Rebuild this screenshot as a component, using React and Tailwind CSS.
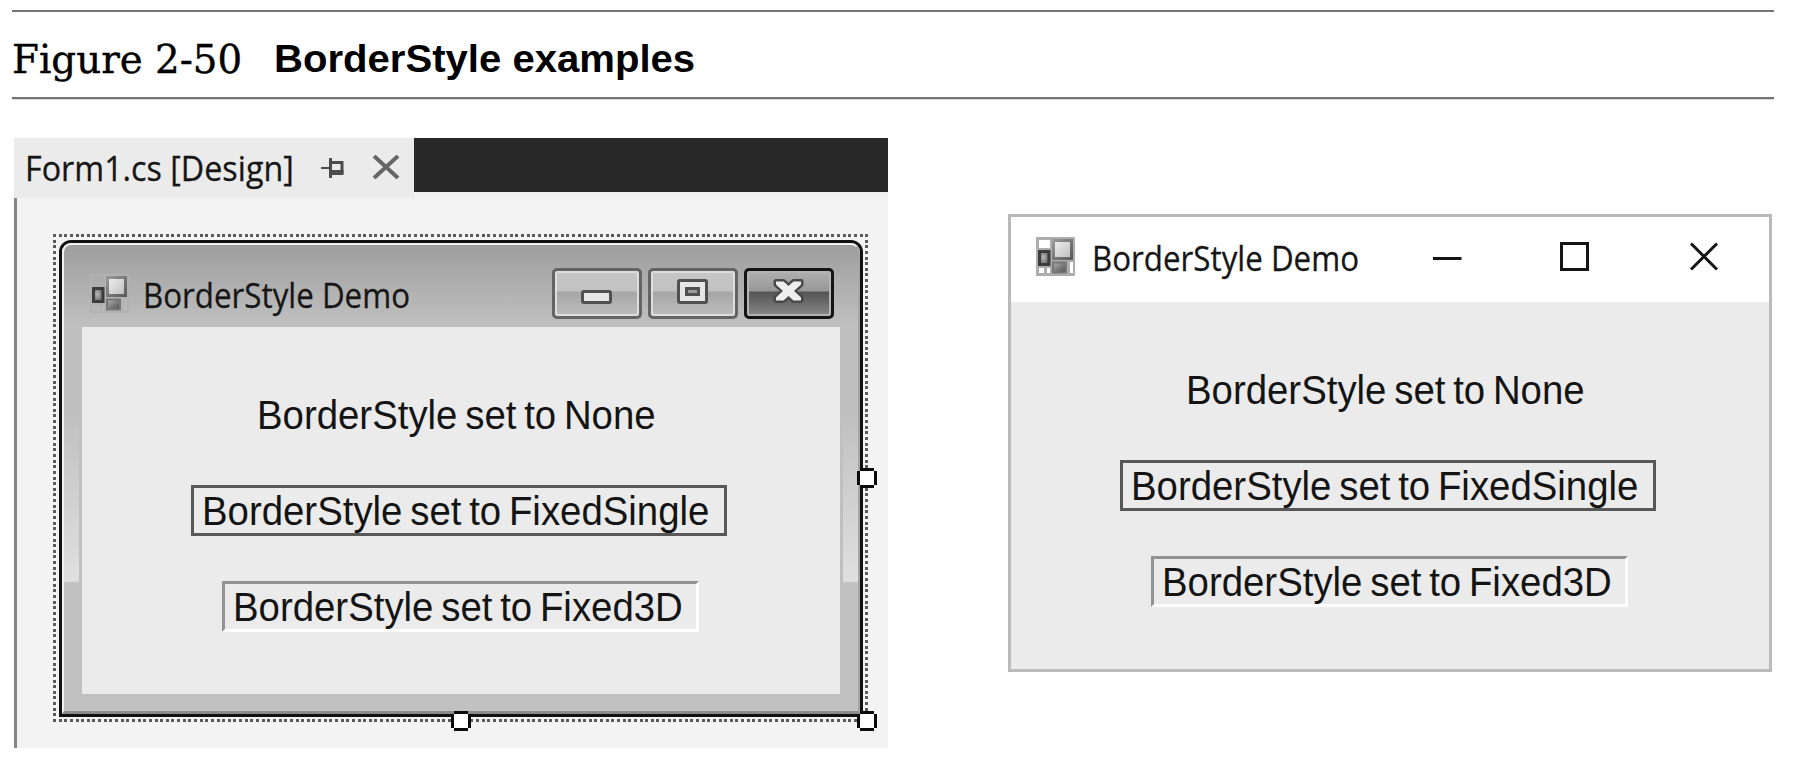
function FormIcon({ framed }) {
  const id = framed ? "framed" : "plain";
  return (
    <svg className="h-[39px] w-[39px] shrink-0" viewBox="0 0 39 39">
      <defs>
        <linearGradient id={id + "-light"} x1="0" y1="0" x2="1" y2="1">
          <stop offset="0" stopColor="#f0f0f0" />
          <stop offset="1" stopColor="#bdbdbd" />
        </linearGradient>
        <linearGradient id={id + "-edge"} x1="0" y1="0" x2="1" y2="1">
          <stop offset="0" stopColor="#979797" />
          <stop offset="1" stopColor="#5c5c5c" />
        </linearGradient>
        <radialGradient id={id + "-core"} cx="0.4" cy="0.45" r="0.7">
          <stop offset="0" stopColor="#b8b8b8" />
          <stop offset="1" stopColor="#5a5a5a" />
        </radialGradient>
        <linearGradient id={id + "-low"} x1="0" y1="0" x2="1" y2="1">
          <stop offset="0" stopColor="#b0b0b0" />
          <stop offset="1" stopColor="#4e4e4e" />
        </linearGradient>
      </defs>
      {framed ? (
        <>
          <rect width="39" height="39" fill="#adadad" />
          <rect x="3" y="3" width="11" height="8" fill="#fff" />
          <rect x="3" y="31" width="5" height="5" fill="#fff" />
          <rect x="11" y="31" width="3" height="5" fill="#fff" />
          <rect x="34" y="25" width="3" height="11" fill="#fff" />
        </>
      ) : (
        <>
          <rect x="1" y="1" width="37" height="37" fill="none" stroke="#b2b2b2" strokeWidth="2" />
          <path d="M15 2v35M2 13h13M2 30h13M11 30v7M33 24v13" stroke="#b2b2b2" strokeWidth="2" />
        </>
      )}
      <rect x="17.5" y="3.500" width="18" height="18" fill={`url(#${id}-light)`} stroke={`url(#${id}-edge)`} strokeWidth="3" />
      <rect x="3.500" y="14.500" width="9.500" height="13" fill={`url(#${id}-core)`} stroke="#3d3d3d" strokeWidth="3" />
      <rect x="17" y="25.500" width="13" height="10" fill={`url(#${id}-low)`} stroke="#777" strokeWidth="2" />
    </svg>
  );
}

function WindowTitle() {
  return (
    <span className="origin-left scale-x-[0.894] whitespace-nowrap font-['Open_Sans',sans-serif] text-[35px] leading-[48px] text-[#161616] [-webkit-text-stroke:0.3px_#161616]">
      BorderStyle Demo
    </span>
  );
}

function Label({ children }) {
  return (
    <span className="inline-block origin-left scale-x-[0.959] whitespace-nowrap text-[40px] leading-[45px] [word-spacing:-3px]">
      {children}
    </span>
  );
}

function FormBody() {
  return (
    <div className="flex h-[367px] flex-col items-start gap-[45px] bg-[#ebebeb] pt-[62px] font-['Liberation_Sans',sans-serif] text-[#141414]">
      <div className="ml-[175px] h-[51px] pt-[4px]">
        <Label>BorderStyle set to None</Label>
      </div>
      <div className="ml-[109px] h-[51px] w-[536px] border-[3px] border-[#585858] pt-px pl-[8px]">
        <Label>BorderStyle set to FixedSingle</Label>
      </div>
      <div className="ml-[140px] h-[51px] w-[477px] border-[3px] border-t-[#929292] border-r-white border-b-white border-l-[#929292] pt-px pl-[8px]">
        <Label>BorderStyle set to Fixed3D</Label>
      </div>
    </div>
  );
}

function CaptionButton({ dark, children }) {
  return (
    <div
      className={
        "flex h-[51px] w-[90px] justify-center rounded-[5px] border-[3px] pr-[2px] " +
        (dark
          ? "border-[#151515] bg-[linear-gradient(#b0b0b0_0,#989898_20px,#545454_21px,#888888_100%)] shadow-[inset_0_0_0_2px_#b4b4b4]"
          : "border-[#646464] bg-[linear-gradient(#c6c6c6_0,#c2c2c2_20px,#a6a6a6_21px,#bdbdbd_100%)] shadow-[inset_0_0_0_2px_#dedede]")
      }
    >
      {children}
    </div>
  );
}

function Handle({ place }) {
  return (
    <svg className={"absolute h-5 w-5 " + place} viewBox="0 0 20 20">
      <path d="M3 0h14v3h3v14h-3v3h-14v-3h-3v-14h3z" fill="#0a0a0a" />
      <rect x="3" y="3" width="14" height="14" fill="#fff" />
    </svg>
  );
}

function Selection() {
  return (
    <>
      <div className="absolute -top-[6px] -left-[6px] h-[3px] w-[815px] bg-[repeating-linear-gradient(90deg,#5a5a5a_0,#5a5a5a_3px,transparent_3px,transparent_5.640px)]" />
      <div className="absolute top-[479px] -left-[6px] h-[3px] w-[815px] bg-[repeating-linear-gradient(90deg,#5a5a5a_0,#5a5a5a_3px,transparent_3px,transparent_5.640px)]" />
      <div className="absolute -top-[6px] -left-[6px] h-[488px] w-[3px] bg-[repeating-linear-gradient(180deg,#5a5a5a_0,#5a5a5a_3px,transparent_3px,transparent_5.640px)]" />
      <div className="absolute -top-[6px] left-[806px] h-[488px] w-[3px] bg-[repeating-linear-gradient(180deg,#5a5a5a_0,#5a5a5a_3px,transparent_3px,transparent_5.640px)]" />
      <Handle place="top-[471px] left-[392px]" />
      <Handle place="top-[228px] left-[798px]" />
      <Handle place="top-[471px] left-[798px]" />
    </>
  );
}

function DesignerWindow() {
  return (
    <div className="relative h-[477px] w-[804px]">
      <div className="h-full rounded-t-[12px] border-[3px] border-[#111]">
        <div className="h-full overflow-hidden rounded-t-[9px] border-t-2 border-r-2 border-b-[3px] border-l-2 border-t-[#f2f2f2] border-r-[#a6a6a6] border-b-[#8b8b8b] border-l-[#f2f2f2] bg-[linear-gradient(#9e9e9e_0,#c0c0c0_82px,#c0c0c0_170px,#e0e0e0_336px,#c1c1c1_338px,#c1c1c1_100%)]">
          <div className="flex h-[82px] items-start pt-[23px] pr-[24px] pl-[26px]">
            <div className="mt-[6px]">
              <FormIcon />
            </div>
            <div className="mt-[3px] ml-[14px] flex">
              <WindowTitle />
            </div>
            <div className="ml-auto flex gap-[6px]">
              <CaptionButton>
                <svg className="mt-[19px] h-[14px] w-[31px]" viewBox="0 0 31 14">
                  <rect x="1.500" y="1.500" width="28" height="11" rx="1.500" fill="#e6e6e6" stroke="#505050" strokeWidth="3" />
                </svg>
              </CaptionButton>
              <CaptionButton>
                <svg className="mt-[8px] h-[25px] w-[31px]" viewBox="0 0 31 25">
                  <rect x="1.500" y="1.500" width="28" height="22" rx="1.500" fill="#e6e6e6" stroke="#505050" strokeWidth="3" />
                  <rect x="9.500" y="9.500" width="12" height="6" fill="#9c9c9c" stroke="#505050" strokeWidth="3" />
                </svg>
              </CaptionButton>
              <CaptionButton dark>
                <svg className="mt-[8px] h-[24px] w-[31px]" viewBox="0 0 31 24">
                  <path
                    d="M3 2.500h7.500L15.500 7l5-4.500H28v3L21 12l7 6.500v3h-7.500L15.500 17l-5 4.500H3v-3L10 12 3 5.500z"
                    fill="#fff"
                    stroke="#4a4a4a"
                    strokeWidth="5"
                    strokeLinejoin="round"
                  />
                  <path
                    d="M3 2.500h7.500L15.500 7l5-4.500H28v3L21 12l7 6.500v3h-7.500L15.500 17l-5 4.500H3v-3L10 12 3 5.500z"
                    fill="#efefef"
                  />
                </svg>
              </CaptionButton>
            </div>
          </div>
          <div className="mr-[18px] ml-[18px] shadow-[0_0_0_3px_#c0c0c0]">
            <FormBody />
          </div>
        </div>
      </div>
      <Selection />
    </div>
  );
}

function Designer() {
  return (
    <section className="h-[610px] w-[874px]">
      <div className="flex h-[60px] bg-[#f2f2f2]">
        <div className="flex h-[60px] w-[400px] items-start bg-[#ebebeb] pl-[11px]">
          <span className="mt-[5px] w-[296px] origin-left scale-x-[0.922] whitespace-nowrap font-['Open_Sans',sans-serif] text-[35px] leading-[50px] text-[#161616] [-webkit-text-stroke:0.3px_#161616]">
            Form1.cs [Design]
          </span>
          <svg className="mt-[20px] h-[20px] w-[23px]" viewBox="0 0 23 20" fill="none" stroke="#4c4c4c">
            <path d="M0 10h9" strokeWidth="2" />
            <path d="M9.500 0v20" strokeWidth="3" />
            <path d="M9 4.500h12v11" strokeWidth="3" />
            <path d="M9 14.500h13.500" strokeWidth="5" />
          </svg>
          <svg className="mt-[17px] ml-[28px] h-[24px] w-[28px]" viewBox="0 0 28 24" fill="none" stroke="#666" strokeWidth="4">
            <path d="M2 1L26 23M26 1L2 23" />
          </svg>
        </div>
        <div className="h-[54px] flex-1 bg-[#292929]" />
      </div>
      <div className="h-[550px] border-l-[3px] border-[#868686] bg-[#f3f3f3] pt-[42px] pl-[42px]">
        <DesignerWindow />
      </div>
    </section>
  );
}

function RunningWindow() {
  return (
    <section className="mt-[76px] ml-[120px] h-[458px] w-[764px] border-[3px] border-[#bababa] bg-[#ebebeb]">
      <div className="flex h-[85px] items-start bg-white pt-[20px] pl-[25px]">
        <FormIcon framed />
        <div className="mt-[-3px] ml-[17px] flex w-[340px]">
          <WindowTitle />
        </div>
        <svg className="mt-[5px] ml-[1px] h-[29px] w-[286px]" viewBox="0 0 286 29" fill="none" stroke="#141414" strokeWidth="3">
          <path d="M0 16.500h28.500" />
          <rect x="128.500" y="1.500" width="26" height="26" />
          <path d="M258 1.500l26 26M284 1.500l-26 26" />
        </svg>
      </div>
      <FormBody />
    </section>
  );
}

export default function App() {
  return (
    <div className="h-[774px] w-[1802px] overflow-hidden bg-white pt-[10px] pl-[12px]">
      <header className="flex h-[89px] w-[1762px] items-start border-y-2 border-[#747474] pt-[23px] text-black shadow-[0_1px_0_#d8d8d8]">
        <h2 className="w-[261px] origin-left scale-x-[0.970] whitespace-nowrap font-['DejaVu_Serif',serif] text-[40px] leading-[48px] [-webkit-text-stroke:0.4px_#000]">
          Figure 2-50
        </h2>
        <h1 className="ml-[1px] origin-left scale-x-[1.028] whitespace-nowrap font-['Liberation_Sans',sans-serif] text-[39px] leading-[48px] font-bold">
          BorderStyle examples
        </h1>
      </header>
      <main className="mt-[39px] flex items-start pl-[2px]">
        <Designer />
        <RunningWindow />
      </main>
    </div>
  );
}
